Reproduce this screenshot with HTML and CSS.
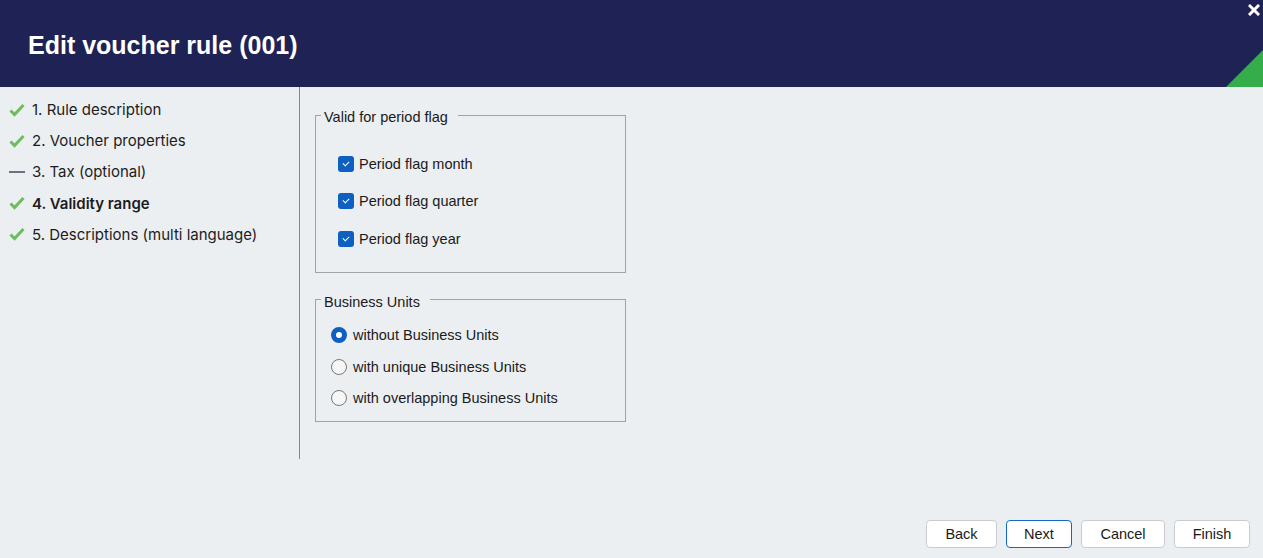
FILE: index.html
```html
<!DOCTYPE html>
<html lang="en">
<head>
  <meta charset="UTF-8" />
  <meta name="viewport" content="width=device-width, initial-scale=1.0"/>
  <title>Edit voucher rule (001)</title>
  <link rel="stylesheet" href="styles.css">
</head>
<body>
  <div class="header">
    <h1>Edit voucher rule (001)</h1>
    <svg class="close" width="12" height="12" viewBox="0 0 12 12">
      <path d="M2 2 L10 10 M10 2 L2 10" stroke="#fff" stroke-width="3" stroke-linecap="square"/>
    </svg>
    <svg class="corner" width="37" height="37" viewBox="0 0 37 37">
      <polygon points="0,37 37,37 37,0" fill="#35ad4a"/>
    </svg>
  </div>

  <div class="main">
    <ul class="steps">
      <li>
        <svg width="16" height="14" viewBox="0 0 16 14"><path d="M1.5 7.5 L5.5 11.5 L14.5 2" fill="none" stroke="#6cbd5c" stroke-width="3"/></svg>
        1. Rule description
      </li>
      <li>
        <svg width="16" height="14" viewBox="0 0 16 14"><path d="M1.5 7.5 L5.5 11.5 L14.5 2" fill="none" stroke="#6cbd5c" stroke-width="3"/></svg>
        2. Voucher properties
      </li>
      <li>
        <svg width="16" height="14" viewBox="0 0 16 14"><path d="M0 7 L16 7" fill="none" stroke="#6b7284" stroke-width="2"/></svg>
        3. Tax (optional)
      </li>
      <li class="current">
        <svg width="16" height="14" viewBox="0 0 16 14"><path d="M1.5 7.5 L5.5 11.5 L14.5 2" fill="none" stroke="#6cbd5c" stroke-width="3"/></svg>
        4. Validity range
      </li>
      <li>
        <svg width="16" height="14" viewBox="0 0 16 14"><path d="M1.5 7.5 L5.5 11.5 L14.5 2" fill="none" stroke="#6cbd5c" stroke-width="3"/></svg>
        5. Descriptions (multi language)
      </li>
    </ul>

    <div class="content">
      <fieldset class="group">
        <legend>Valid for period flag</legend>
        <div class="options flags">
          <div class="option"><span class="check"></span>Period flag month</div>
          <div class="option"><span class="check"></span>Period flag quarter</div>
          <div class="option"><span class="check"></span>Period flag year</div>
        </div>
      </fieldset>

      <fieldset class="group">
        <legend>Business Units</legend>
        <div class="options units">
          <div class="option"><span class="radio selected"></span>without Business Units</div>
          <div class="option"><span class="radio"></span>with unique Business Units</div>
          <div class="option"><span class="radio"></span>with overlapping Business Units</div>
        </div>
      </fieldset>
    </div>
  </div>

  <div class="footer">
    <button class="back">Back</button>
    <button class="next">Next</button>
    <button class="cancel">Cancel</button>
    <button class="finish">Finish</button>
  </div>
</body>
</html>
```

FILE: styles.css
```css
body {
  margin: 0;
  background-color: #eceff2;
  font-family: "Liberation Sans", Arial, sans-serif;
  color: #1a1a1a;
  width: 1263px;
  height: 558px;
  overflow: hidden;
}
.header {
  position: relative;
  height: 87px;
  background-color: #1f2255;
  display: flex;
  align-items: center;
  padding-left: 28px;
}
.header h1 {
  margin: 0;
  color: #fff;
  font-size: 25px;
  font-weight: bold;
  padding-top: 4px;
}
.close {
  position: absolute;
  top: 4px;
  right: 3px;
}
.corner {
  position: absolute;
  right: 0;
  bottom: 0;
}
.main {
  display: flex;
  height: 372px;
}
.steps {
  list-style: none;
  margin: 0;
  padding: 7px 0 0 0;
  width: 299px;
  border-right: 1px solid #7f868d;
  font-family: Inter, "Noto Sans", sans-serif;
  font-size: 15px;
  color: #1c1c1c;
}
.steps li {
  height: 31.2px;
  display: flex;
  align-items: center;
  padding-left: 9px;
}
.steps li svg {
  margin-right: 7px;
  flex-shrink: 0;
}
.steps li.current {
  font-weight: 600;
}
.content {
  padding: 18px 0 0 15px;
  display: flex;
  flex-direction: column;
  gap: 17px;
}
.group {
  margin: 0;
  width: 311px;
  box-sizing: border-box;
  border: 1px solid #a3a3a3;
  padding: 0;
  font-size: 14.5px;
}
.group legend {
  margin-left: 5px;
  padding: 4px 10px 0 3px;
  line-height: 16px;
}
.flags {
  padding: 20px 0 14px 22px;
}
.flags .option {
  height: 37.5px;
}
.units {
  padding: 10px 0 7px 15px;
}
.units .option {
  height: 31.5px;
}
.option {
  display: flex;
  align-items: center;
}
.check {
  width: 16px;
  height: 16px;
  border-radius: 3px;
  background-color: #0d5fc2;
  margin-right: 5px;
  position: relative;
}
.check::after {
  content: "";
  position: absolute;
  left: 5px;
  top: 5px;
  width: 5px;
  height: 3px;
  border-left: 1.5px solid #fff;
  border-bottom: 1.5px solid #fff;
  transform: rotate(-45deg);
}
.radio {
  width: 14px;
  height: 14px;
  border-radius: 50%;
  border: 1px solid #777;
  background-color: #f6f6f6;
  margin-right: 6px;
  flex-shrink: 0;
}
.radio.selected {
  width: 6px;
  height: 6px;
  border: 5px solid #0d5fc2;
  background-color: #fff;
}
.footer {
  height: 99px;
  display: flex;
  justify-content: flex-end;
  align-items: flex-end;
  gap: 9px;
  padding: 0 13px 10px 0;
  box-sizing: border-box;
}
.footer button {
  height: 28px;
  background: #fff;
  border: 1px solid #c9cbce;
  border-radius: 4px;
  font-family: "Liberation Sans", Arial, sans-serif;
  font-size: 14.5px;
  color: #1a1a1a;
  padding: 0;
}
.footer .back { width: 71px; }
.footer .next { width: 66px; border-color: #1468c9; }
.footer .cancel { width: 84px; }
.footer .finish { width: 76px; }
```
